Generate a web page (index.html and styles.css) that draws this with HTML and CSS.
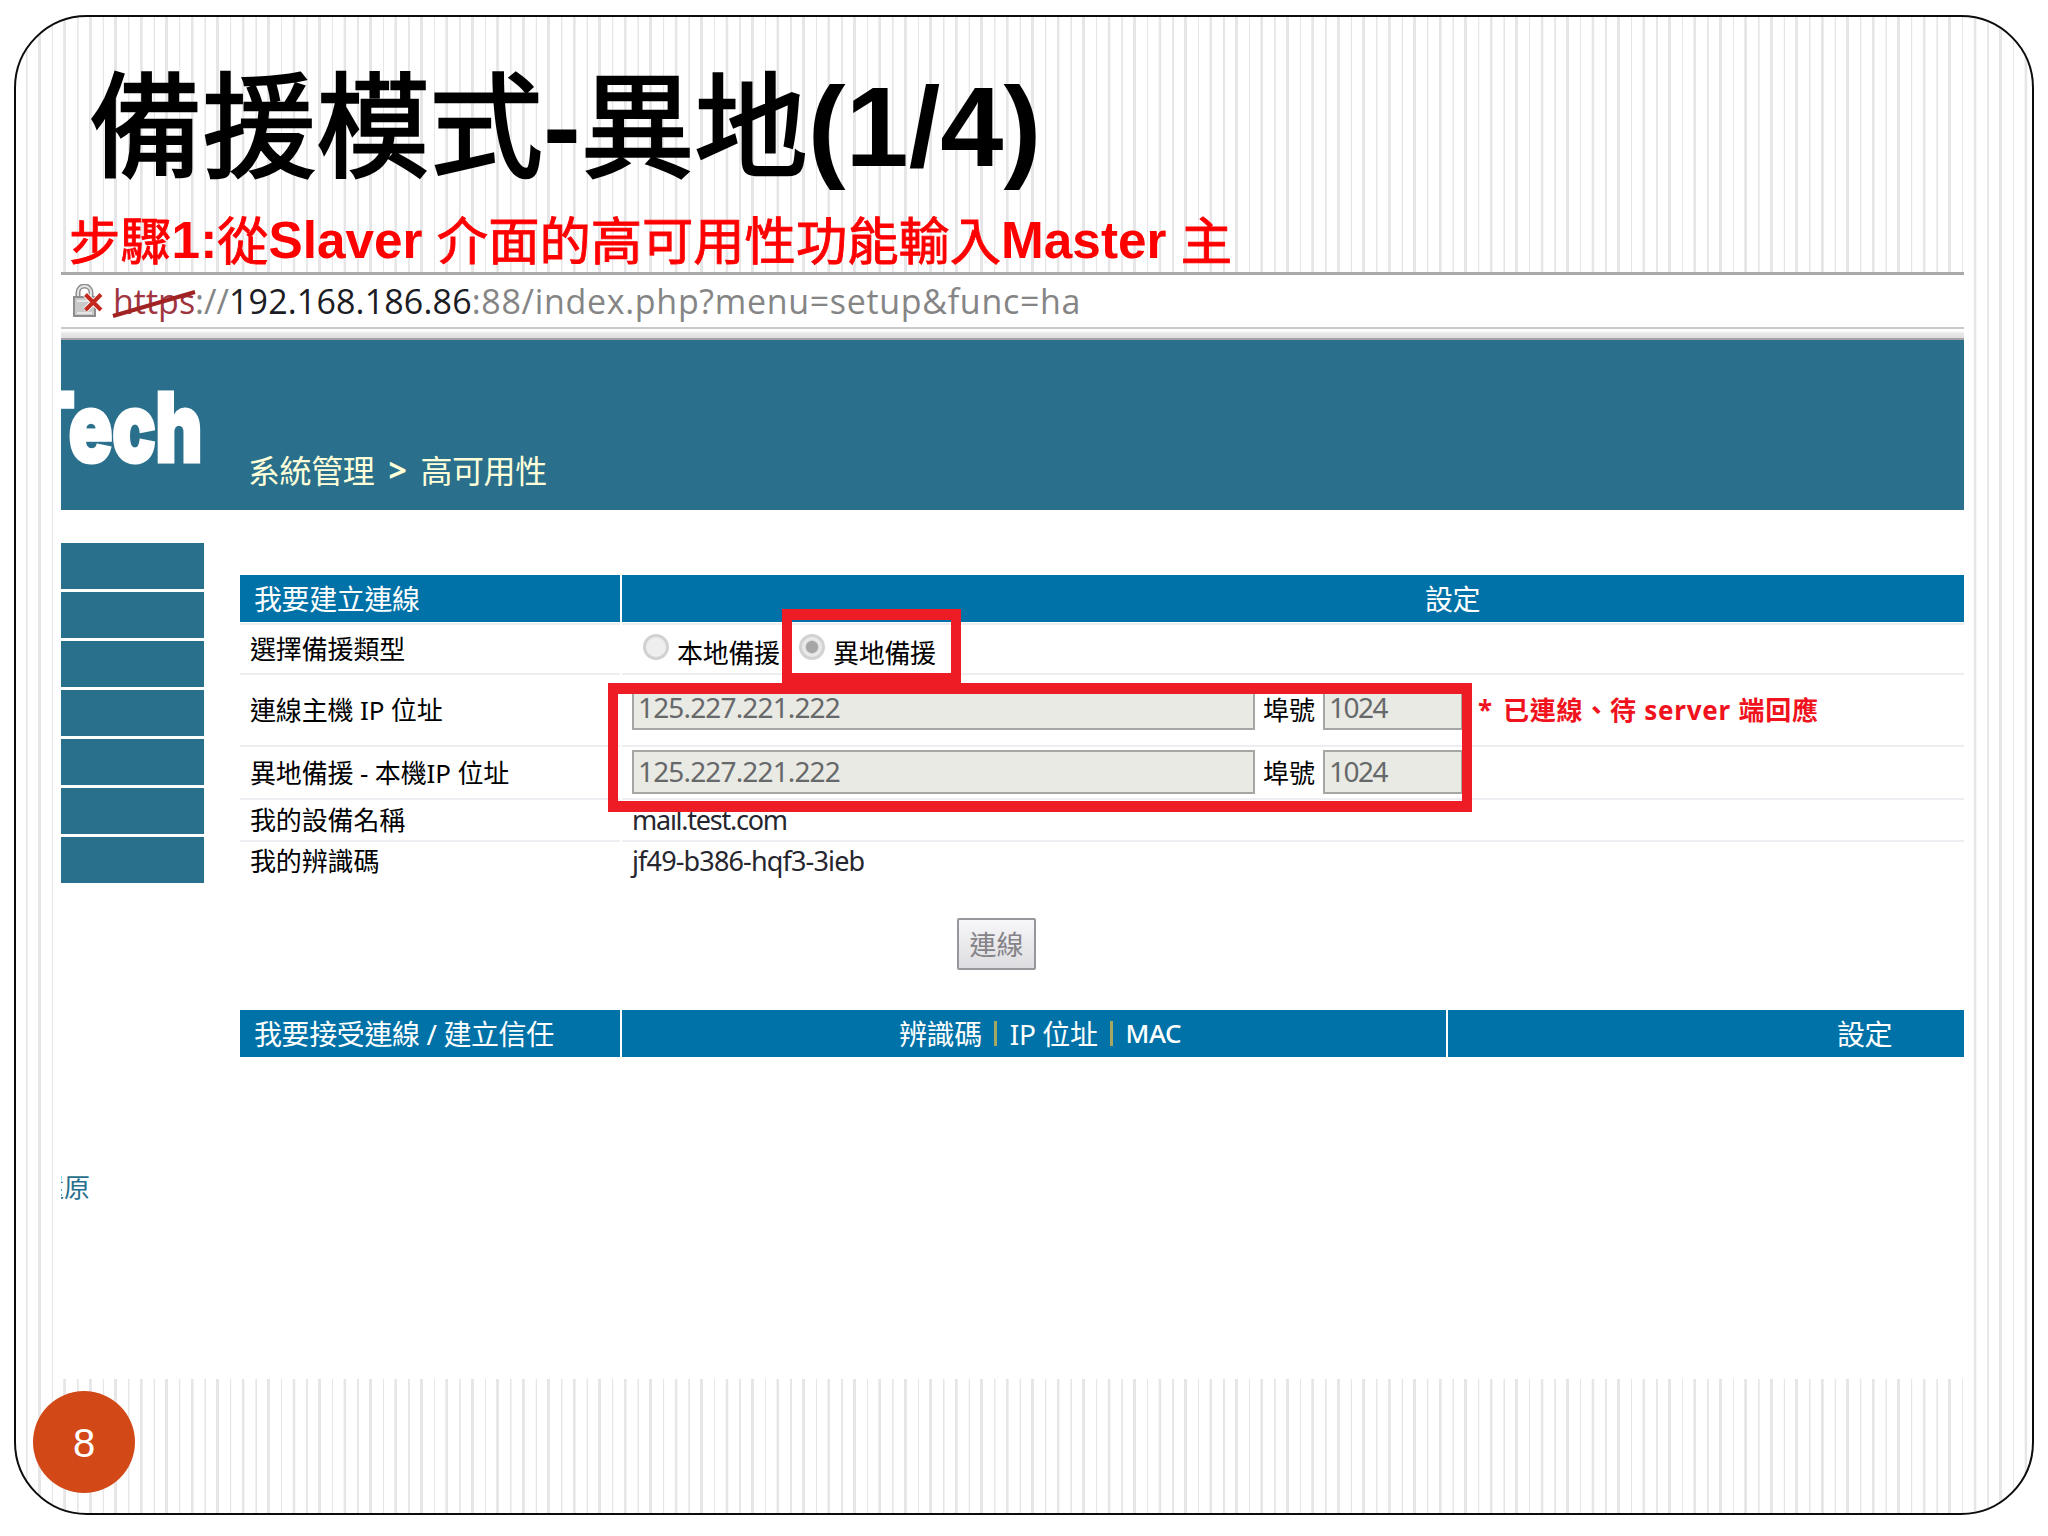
FILE: index.html
```
<!DOCTYPE html>
<html lang="zh-Hant">
<head>
<meta charset="utf-8">
<title>備援模式-異地(1/4)</title>
<link rel="stylesheet" href="styles.css">
</head>
<body>
<main class="slide">
  <div class="frame"></div>
  <h1 class="title"><span class="han">備援模式</span>-<span class="han">異地</span>(1/4)</h1>
  <p class="step"><span class="han">步驟</span>1:<span class="han">從</span>Slaver <span class="han">介面的高可用性功能輸入</span>Master <span class="han">主</span></p>

  <section class="shot">
    <div class="address">
      <svg class="lock" viewBox="0 0 30 34" width="30" height="34">
        <path d="M5 14V8.500a6.500 6.500 0 0 1 13 0V14" fill="none" stroke="#8d8d8d" stroke-width="5"/>
        <path d="M5 14V8.500a6.500 6.500 0 0 1 13 0V14" fill="none" stroke="#e4e4e4" stroke-width="2"/>
        <rect x="1" y="13" width="21" height="19" fill="#c9c9c9" stroke="#8d8d8d" stroke-width="2"/>
        <path d="M4 17h15M4 29h15" stroke="#e6e6e6" stroke-width="2"/>
        <path d="M12.500 10.500L28 26M28 10.500L12.500 26" stroke="#fff" stroke-width="6"/>
        <path d="M12.500 10.500L28 26M28 10.500L12.500 26" stroke="#c5281c" stroke-width="4"/>
      </svg>
      <span class="url"><span class="scheme">https<svg class="strike" viewBox="0 0 86 30" width="86" height="30"><path d="M1 27L83 3" stroke="#a02222" stroke-width="4"/></svg></span>://<span class="host">192.168.186.86</span><span class="path">:88/index.php?menu=setup&amp;func=ha</span></span>
    </div>
    <div class="chrome-edge"></div>

    <header class="banner">
      <div class="logo"><span class="logo-text">Tech</span></div>
      <div class="crumbs"><span>系統管理</span><b>&gt;</b><span>高可用性</span></div>
    </header>

    <div class="body">
      <aside class="side">
        <nav class="menu"><i></i><i></i><i></i><i></i><i></i><i></i><i></i></nav>
        <div class="restore"><span>還原</span></div>
      </aside>

      <div class="content">
        <div class="grid head">
          <div class="cell th">我要建立連線</div>
          <div class="cell th set-a">設定</div>
        </div>
        <div class="rule-row grid"><i></i><i></i></div>
        <div class="grid row r1">
          <div class="cell">選擇備援類型</div>
          <div class="cell types">
            <span class="radio"></span><span class="opt opt-a">本地備援</span>
            <span class="radio on"></span><span class="opt">異地備援</span>
          </div>
        </div>
        <div class="grid row r2">
          <div class="cell">連線主機 IP 位址</div>
          <div class="cell fields">
            <span class="input ip">125.227.221.222</span><span class="port-label">埠號</span><span class="input port">1024</span>
            <span class="status"><span class="star">*</span>已連線、待 server 端回應</span>
          </div>
        </div>
        <div class="grid row r3">
          <div class="cell">異地備援 - 本機IP 位址</div>
          <div class="cell fields">
            <span class="input ip">125.227.221.222</span><span class="port-label">埠號</span><span class="input port">1024</span>
          </div>
        </div>
        <div class="grid row r4">
          <div class="cell">我的設備名稱</div>
          <div class="cell value">mail.test.com</div>
        </div>
        <div class="grid row r5">
          <div class="cell">我的辨識碼</div>
          <div class="cell value code">jf49-b386-hqf3-3ieb</div>
        </div>
        <button class="connect">連線</button>
        <div class="grid head three">
          <div class="cell th">我要接受連線 / 建立信任</div>
          <div class="cell th ids"><span>辨識碼</span><i></i><span>IP 位址</span><i></i><span class="mac">MAC</span></div>
          <div class="cell th set-b">設定</div>
        </div>
      </div>
    </div>
  </section>

  <div class="mark mark-type"></div>
  <div class="mark mark-fields"></div>
  <div class="page-no">8</div>
</main>
</body>
</html>
```
FILE: styles.css
```
* { box-sizing: border-box; }
body { margin: 0; background: #fff; }

.slide {
  position: relative;
  width: 2048px;
  height: 1536px;
  padding: 67px 82px 0 54px;
  overflow: hidden;
  font-family: "Noto Sans", "Noto Sans CJK TC", sans-serif;
  color: #000;
}

/* rounded outline filled with alternating thick and thin pinstripes */
.frame {
  position: absolute;
  inset: 15px 14px 21px 13.5px;
  border: 2px solid #0c0c0c;
  border-radius: 73px;
  background: repeating-linear-gradient(90deg,
    #fff 0 10px, #e6e6e7 10.4px 11.4px, #fff 11.800px 21.700px,
    #e6e5e7 22.100px 24.500px, #fff 24.900px 25.470px);
}

.title, .step, .shot { position: relative; margin: 0; }

.title {
  padding-left: 35px;
  font: bold 113.5px/120px "Liberation Sans", "Noto Sans CJK TC", sans-serif;
  white-space: nowrap;
  height: 120px;
}
.step {
  margin-top: 24px;
  height: 60px;
  padding-left: 15px;
  font: bold 51.3px/60px "Liberation Sans", "Noto Sans CJK TC", sans-serif;
  color: #f00;
  white-space: nowrap;
}
.han { font-weight: 400; line-height: 0; }
.title .han { vertical-align: -2px; -webkit-text-stroke: 2.600px #000; }
.step .han { vertical-align: -2px; -webkit-text-stroke: .9px #f00; }

.shot {
  margin-top: 1px;
  width: 1912px;
  height: 1107px;
  padding: 0 2px 0 7px;
  background: #fff;
}

.address {
  display: flex;
  align-items: center;
  height: 55px;
  padding-left: 12px;
  border-top: 3px solid #a9a9a9;
  font: 34px/50px "Open Sans", "Noto Sans", sans-serif;
  color: #858585;
}
.lock { margin-right: 10px; }
.url { white-space: pre; }
.scheme { position: relative; color: #a0353f; }
.strike { position: absolute; left: -1px; top: 11px; }
.host { color: #1c1c24; letter-spacing: .15px; }
.path { letter-spacing: .68px; }

.chrome-edge {
  height: 13px;
  border-top: 2px solid #c9c9c9;
  border-bottom: 2px solid #a3a3a6;
  background: linear-gradient(#fff 0 2px, #e9e8ea 4px, #dfdee1);
}

.banner {
  display: flex;
  height: 170px;
  background: #2a708c;
}
.logo {
  display: flex;
  justify-content: flex-end;
  width: 141px;
  height: 170px;
  padding-top: 38px;
  overflow: hidden;
}
.logo-text {
  flex: none;
  font: 900 96px/98px Inter, "Liberation Sans", sans-serif;
  letter-spacing: -1px;
  color: #fff;
  -webkit-text-stroke: 3px #fff;
  transform: scaleX(.76);
  transform-origin: right center;
}
.crumbs {
  display: flex;
  align-items: center;
  height: 40px;
  margin: 109px 0 0 46px;
  font-size: 32px;
  letter-spacing: -.4px;
  color: #ffffd9;
}
.crumbs b { width: 46px; text-align: center; font-weight: 700; }

.body { display: flex; gap: 36px; padding-top: 33px; }
.side { width: 143px; }
.menu { display: grid; gap: 3px; }
.menu i { height: 46px; background: #28708c; }
.restore {
  display: flex;
  justify-content: flex-end;
  width: 29px;
  margin-top: 288px;
  overflow: hidden;
  font-size: 26px;
  line-height: 32px;
  color: #28708c;
}
.restore span { flex: none; }

.content { width: 1724px; padding-top: 32px; font-size: 26px; }
.grid { display: grid; grid-template-columns: 380px 1342px; gap: 2px; }
.three { grid-template-columns: 380px 824px 516px; }
.cell {
  display: flex;
  align-items: center;
  padding: 0 0 2px 10px;
  white-space: nowrap;
}
.th {
  height: 47px;
  padding-left: 14px;
  font-size: 28px;
  letter-spacing: -.4px;
  background: #0072a8;
  color: #fff;
}
.set-a { padding-left: 803px; }
.set-b { padding-left: 389px; }
.ids { padding-left: 277px; }
.ids i { width: 3px; height: 25px; margin: 2px 13px 0 12px; background: #a5a860; }
.mac { font-size: 26px; font-weight: 500; }

.rule-row { margin-top: 1px; }
.rule-row i { height: 2px; background: #eeedf1; }
.row .cell { border-bottom: 2px solid #eeedf1; }
.row .cell:first-child { letter-spacing: -.15px; }
.r1 { height: 50px; }
.r2 { height: 72px; }
.r3 { height: 53px; }
.r4 { height: 41px; }
.r5 { height: 37px; }
.r5 .cell { border-bottom: 0; }

.row .types { padding-left: 21px; padding-bottom: 0; }
.radio {
  width: 26px;
  height: 26px;
  margin: 0 8px 4px 0;
  border: 3px solid #d2d2d2;
  border-radius: 50%;
  background: #eee;
}
.radio.on { background: radial-gradient(circle, #a6a6a6 0 5.500px, #e9e9e9 7px); }
.opt { padding-top: 6px; letter-spacing: -.3px; }
.opt-a { width: 122px; }

.input {
  height: 44px;
  padding-left: 4px;
  border: 2px solid #a6a6a4;
  background: #eaeae4;
  font-size: 28px;
  line-height: 39px;
  letter-spacing: -.85px;
  color: #66686a;
}
.r2 .input { margin-bottom: 2px; }
.r3 .cell { padding-bottom: 1px; }
.ip { width: 623px; }
.port { width: 140px; letter-spacing: -1.500px; }
.port-label { width: 68px; padding-left: 8px; }
.status { margin-left: 15px; font-weight: 700; letter-spacing: .75px; color: #f0121c; }
.star { display: inline-block; width: 25px; }

.value { font-size: 27px; letter-spacing: -1.250px; color: #26262e; }
.code { letter-spacing: -.85px; }
.connect {
  display: block;
  width: 79px;
  height: 52px;
  margin: 40px 0 40px 717px;
  padding: 2px 0 0;
  border: 2px solid #98969b;
  border-radius: 2px;
  background: linear-gradient(#f7f6f8, #dddce0);
  font: 27px/46px "Noto Sans", "Noto Sans CJK TC", sans-serif;
  color: #858388;
}

/* red call-outs drawn over the form */
.mark { position: absolute; border: 11px solid #ee1c25; border-width: 11px 10px; }
.mark-type { left: 782px; top: 609px; width: 179px; height: 75px; }
.mark-fields { left: 608px; top: 683px; width: 864px; height: 129px; }

.page-no {
  position: absolute;
  left: 33px;
  top: 1391px;
  width: 102px;
  height: 102px;
  border-radius: 50%;
  background: #d34817;
  color: #fff;
  font: 40px/104px "Liberation Sans", sans-serif;
  text-align: center;
}
```
